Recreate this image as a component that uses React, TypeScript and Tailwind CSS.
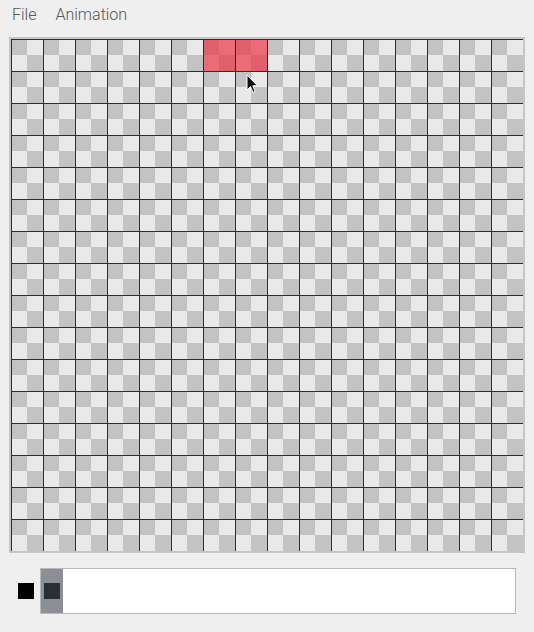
import React from "react";

const COLS = 16;
const ROWS = 16;
const painted = new Set([6, 7]);

function Cursor() {
  return (
    <svg
      className="absolute left-[246px] top-[74px] pointer-events-none"
      width="13"
      height="20"
      viewBox="0 0 13 20"
    >
      <path
        d="M1 1 L1 16 L4.5 12.5 L7 18.5 L9.2 17.6 L6.8 11.8 L11.5 11.8 Z"
        fill="#111"
        stroke="#fff"
        strokeWidth="1"
        strokeLinejoin="round"
      />
    </svg>
  );
}

export default function App() {
  const cells = Array.from({ length: COLS * ROWS }, (_, i) => i);

  return (
    <div className="relative w-[534px] h-[632px] bg-[#efefef] font-['Roboto',sans-serif] overflow-hidden">
      {/* Menu bar */}
      <div className="flex items-center gap-[19px] pl-3 h-[29px] text-[16px] text-[#555] font-light">
        <span>File</span>
        <span>Animation</span>
      </div>

      {/* Canvas */}
      <div className="ml-[9px] mt-[8px] w-[516px] h-[516px] border-2 border-[#c6c6c6]">
        <div className="grid grid-cols-[repeat(16,32px)] grid-rows-[repeat(16,32px)] w-[512px] h-[512px] bg-[conic-gradient(#e9e9e9_0_25%,#c3c3c3_0_50%,#e9e9e9_0_75%,#c3c3c3_0)] bg-[length:32px_32px]">
          {cells.map((i) => (
            <div
              key={i}
              className={`border-l border-t border-[#2e2e2e] ${
                painted.has(i) ? "bg-[rgba(238,50,70,0.69)]" : ""
              }`}
            />
          ))}
        </div>
      </div>

      {/* Palette */}
      <div className="flex items-center mt-[15px] pl-[18px]">
        <div className="w-4 h-4 bg-black" />
        <div className="ml-[6px] flex w-[476px] h-[46px] border border-[#b9b9b9] bg-white">
          <div className="w-[22px] h-full bg-[#8c9094] flex items-center pl-[3px]">
            <div className="w-4 h-4 bg-[#2a2f34]" />
          </div>
        </div>
      </div>

      <Cursor />
    </div>
  );
}
